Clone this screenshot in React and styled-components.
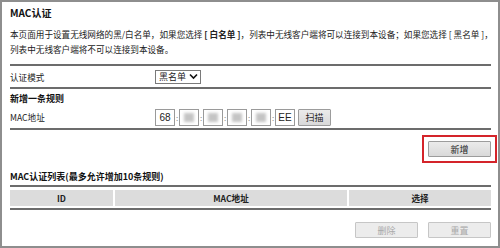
import React from 'react';
import styled, { createGlobalStyle } from 'styled-components';

const GlobalStyle = createGlobalStyle`
  html, body {
    margin: 0;
    padding: 0;
    background: #fff;
  }
  body {
    font-family: "Noto Sans CJK SC", "Liberation Sans", sans-serif;
    color: #222;
  }
`;

//outer window frame
const Frame = styled.div`
  width: 500px;
  height: 248px;
  box-sizing: border-box;
  border: 2px solid #8e8e8e;
  padding: 4px 7px 0 8px;
  position: relative;
  overflow: hidden;
`;

const Title = styled.div`
  font-size: 10px;
  font-weight: 700;
  line-height: 14px;
  color: #111;
  margin-bottom: 7px;
`;

const Intro = styled.p`
  margin: 0;
  font-size: 8.6px;
  line-height: 15px;
  color: #222;
  white-space: nowrap;
`;

const Mark = styled.span`
  font-weight: ${(p) => (p.$bold ? 700 : 400)};
`;

const Divider = styled.div`
  height: 2px;
  background: #6c6c6c;
  margin-top: ${(p) => p.$top || 0}px;
`;

const Row = styled.div`
  display: flex;
  align-items: center;
  height: ${(p) => p.$h || 20}px;
  font-size: 8.6px;
`;

const Label = styled.div`
  width: 145px;
  flex-shrink: 0;
`;

const Heading = styled.div`
  font-size: 9px;
  font-weight: 700;
  line-height: 14px;
  color: #111;
  margin-top: ${(p) => p.$top || 0}px;
  white-space: nowrap;
`;

const FakeSelect = styled.div`
  box-sizing: border-box;
  width: 46px;
  height: 14px;
  border: 1px solid #7a7a7a;
  display: flex;
  align-items: center;
  gap: 3px;
  padding-left: 3px;
  font-size: 9px;
  line-height: 12px;
  background: #fff;
`;

const MacGroup = styled.div`
  display: flex;
  align-items: center;
`;

const MacBox = styled.div`
  box-sizing: border-box;
  width: 20px;
  height: 17px;
  border: 1px solid #9a9a9a;
  display: flex;
  align-items: center;
  justify-content: center;
  font-family: "Liberation Sans", sans-serif;
  font-size: 10px;
  color: #222;
  background: #fff;
`;

const Blur = styled.span`
  width: 10px;
  height: 9px;
  background: #c4c4c4;
  filter: blur(1.6px);
`;

const Sep = styled.span`
  width: 4px;
  text-align: center;
  font-size: 8px;
  color: #888;
  line-height: 17px;
`;

const Button = styled.button`
  box-sizing: border-box;
  width: ${(p) => p.$w || 63}px;
  height: ${(p) => p.$h || 16}px;
  padding: 0;
  font-family: inherit;
  font-size: 9px;
  line-height: 1;
  border: 1px solid ${(p) => (p.disabled ? '#c6c6c6' : '#9c9c9c')};
  background: ${(p) =>
    p.disabled ? '#ececec' : 'linear-gradient(#ebebeb, #d9d9d9)'};
  color: ${(p) => (p.disabled ? '#a9a9a9' : '#222')};
  border-radius: 1px;
`;

const ScanButton = styled(Button)`
  margin-left: 3px;
  height: 17px;
`;

const ActionRow = styled.div`
  display: flex;
  justify-content: flex-end;
  gap: 10px;
  margin-top: ${(p) => p.$top || 0}px;
  padding-right: 0;
`;

const Highlight = styled.div`
  outline: 2px solid #d4242a;
  outline-offset: 4px;
  display: flex;
`;

const TableHead = styled.div`
  display: grid;
  grid-template-columns: 103px 232px 1fr;
  gap: 2px;
  margin-top: 3px;
  height: 16px;
`;

const HeadCell = styled.div`
  background: #dcdcdc;
  display: flex;
  align-items: center;
  justify-content: center;
  font-size: 8.6px;
  font-weight: 700;
  color: #222;
`;

const Chevron = () => (
  <svg width="9" height="7" viewBox="0 0 9 7">
    <path d="M1 1.5 L4.5 5 L8 1.5" fill="none" stroke="#111" strokeWidth="1.6" />
  </svg>
);

const macParts = ['68', null, null, null, null, 'EE'];

const App = () => {
  return (
    <>
      <GlobalStyle />
      <Frame>
        <Title>MAC认证</Title>
        <Intro>
          本页面用于设置无线网络的黑/白名单，如果您选择 <Mark $bold>[ 白名单 ]</Mark>，列表中无线客户端将可以连接到本设备；如果您选择 [ 黑名单 ]，
          <br />
          列表中无线客户端将不可以连接到本设备。
        </Intro>
        <Divider $top={7} />
        <Row $h={21}>
          <Label>认证模式</Label>
          <FakeSelect>
            黑名单 <Chevron />
          </FakeSelect>
        </Row>
        <Divider />
        <Heading $top={3}>新增一条规则</Heading>
        <Row $h={22}>
          <Label>MAC地址</Label>
          <MacGroup>
            {macParts.map((part, i) => (
              <React.Fragment key={i}>
                {i > 0 && <Sep>:</Sep>}
                <MacBox>{part ? part : <Blur />}</MacBox>
              </React.Fragment>
            ))}
            <ScanButton $w={33}>扫描</ScanButton>
          </MacGroup>
        </Row>
        <Divider />
        <ActionRow $top={11}>
          <Highlight>
            <Button>新增</Button>
          </Highlight>
        </ActionRow>
        <Heading $top={13}>MAC认证列表(最多允许增加10条规则)</Heading>
        <Divider $top={1} />
        <TableHead>
          <HeadCell>ID</HeadCell>
          <HeadCell>MAC地址</HeadCell>
          <HeadCell>选择</HeadCell>
        </TableHead>
        <Divider $top={2} />
        <ActionRow $top={12}>
          <Button disabled>删除</Button>
          <Button disabled>重置</Button>
        </ActionRow>
      </Frame>
    </>
  );
};

export default App;
